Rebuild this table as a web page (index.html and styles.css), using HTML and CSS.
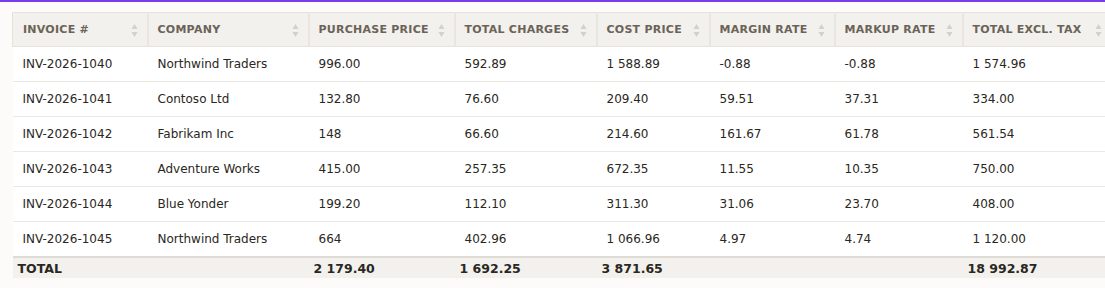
FILE: index.html
```html
<!DOCTYPE html>
<html>
<head>
<meta charset="utf-8">
<link rel="stylesheet" href="styles.css">
</head>
<body>
<div class="topbar"></div>
<div class="wrap">
<table class="grid">
<colgroup>
<col class="c1"><col class="c2"><col class="c3"><col class="c4"><col class="c5"><col class="c6"><col class="c7"><col class="c8">
</colgroup>
<thead>
<tr>
<th><span class="th">INVOICE #</span><span class="sort"><svg width="7" height="16" viewBox="0 0 7 16"><path d="M3.5 2 L6.5 7 L0.5 7 Z" fill="#d4d0c9"/><path d="M3.5 15 L6.5 10 L0.5 10 Z" fill="#d4d0c9"/></svg></span></th>
<th><span class="th">COMPANY</span><span class="sort"><svg width="7" height="16" viewBox="0 0 7 16"><path d="M3.5 2 L6.5 7 L0.5 7 Z" fill="#d4d0c9"/><path d="M3.5 15 L6.5 10 L0.5 10 Z" fill="#d4d0c9"/></svg></span></th>
<th><span class="th">PURCHASE PRICE</span><span class="sort"><svg width="7" height="16" viewBox="0 0 7 16"><path d="M3.5 2 L6.5 7 L0.5 7 Z" fill="#d4d0c9"/><path d="M3.5 15 L6.5 10 L0.5 10 Z" fill="#d4d0c9"/></svg></span></th>
<th><span class="th">TOTAL CHARGES</span><span class="sort"><svg width="7" height="16" viewBox="0 0 7 16"><path d="M3.5 2 L6.5 7 L0.5 7 Z" fill="#d4d0c9"/><path d="M3.5 15 L6.5 10 L0.5 10 Z" fill="#d4d0c9"/></svg></span></th>
<th><span class="th">COST PRICE</span><span class="sort"><svg width="7" height="16" viewBox="0 0 7 16"><path d="M3.5 2 L6.5 7 L0.5 7 Z" fill="#d4d0c9"/><path d="M3.5 15 L6.5 10 L0.5 10 Z" fill="#d4d0c9"/></svg></span></th>
<th><span class="th">MARGIN RATE</span><span class="sort"><svg width="7" height="16" viewBox="0 0 7 16"><path d="M3.5 2 L6.5 7 L0.5 7 Z" fill="#d4d0c9"/><path d="M3.5 15 L6.5 10 L0.5 10 Z" fill="#d4d0c9"/></svg></span></th>
<th><span class="th">MARKUP RATE</span><span class="sort"><svg width="7" height="16" viewBox="0 0 7 16"><path d="M3.5 2 L6.5 7 L0.5 7 Z" fill="#d4d0c9"/><path d="M3.5 15 L6.5 10 L0.5 10 Z" fill="#d4d0c9"/></svg></span></th>
<th><span class="th">TOTAL EXCL. TAX</span><span class="sort"><svg width="7" height="16" viewBox="0 0 7 16"><path d="M3.5 2 L6.5 7 L0.5 7 Z" fill="#d4d0c9"/><path d="M3.5 15 L6.5 10 L0.5 10 Z" fill="#d4d0c9"/></svg></span></th>
</tr>
</thead>
<tbody>
<tr><td>INV-2026-1040</td><td>Northwind Traders</td><td>996.00</td><td>592.89</td><td>1 588.89</td><td>-0.88</td><td>-0.88</td><td>1 574.96</td></tr>
<tr><td>INV-2026-1041</td><td>Contoso Ltd</td><td>132.80</td><td>76.60</td><td>209.40</td><td>59.51</td><td>37.31</td><td>334.00</td></tr>
<tr><td>INV-2026-1042</td><td>Fabrikam Inc</td><td>148</td><td>66.60</td><td>214.60</td><td>161.67</td><td>61.78</td><td>561.54</td></tr>
<tr><td>INV-2026-1043</td><td>Adventure Works</td><td>415.00</td><td>257.35</td><td>672.35</td><td>11.55</td><td>10.35</td><td>750.00</td></tr>
<tr><td>INV-2026-1044</td><td>Blue Yonder</td><td>199.20</td><td>112.10</td><td>311.30</td><td>31.06</td><td>23.70</td><td>408.00</td></tr>
<tr><td>INV-2026-1045</td><td>Northwind Traders</td><td>664</td><td>402.96</td><td>1 066.96</td><td>4.97</td><td>4.74</td><td>1 120.00</td></tr>
</tbody>
<tfoot>
<tr><td>TOTAL</td><td></td><td>2 179.40</td><td>1 692.25</td><td>3 871.65</td><td></td><td></td><td>18 992.87</td></tr>
</tfoot>
</table>
</div>
</body>
</html>
```

FILE: styles.css
```css
html, body {
  margin: 0;
  padding: 0;
  background: #fcfbf9;
  overflow: hidden;
}
body {
  font-family: "DejaVu Sans", sans-serif;
  font-size: 12px;
  color: #2a2722;
}
.topbar {
  height: 2px;
  background: #7c3aed;
}
.wrap {
  padding: 10px 0 0 12px;
  overflow: hidden;
}
.grid {
  border-collapse: collapse;
  table-layout: fixed;
  width: 1098px;
}
.c1 { width: 135px; }
.c2 { width: 161px; }
.c3 { width: 146px; }
.c4 { width: 142px; }
.c5 { width: 113px; }
.c6 { width: 125px; }
.c7 { width: 128px; }
.c8 { width: 148px; }
.grid thead th {
  background: #f2f1ed;
  border-top: 1px solid #e6e2dc;
  border-bottom: 1px solid #e6e2dc;
  border-left: 2px solid #e9e5df;
  height: 32px;
  padding: 1px 9px 0 9px;
  text-align: left;
  vertical-align: middle;
  white-space: nowrap;
}
.grid thead th:first-child {
  border-left: 1px solid #e6e2dc;
  padding-left: 10px;
}
.th {
  font-size: 11px;
  font-weight: bold;
  letter-spacing: 0.25px;
  color: #6b6357;
}
.sort {
  float: right;
  height: 16px;
}
.sort svg { display: block; }
.grid tbody td {
  background: #ffffff;
  height: 34px;
  padding: 0 10px;
  border-bottom: 1px solid #ebe8e3;
  vertical-align: middle;
  white-space: nowrap;
}
.grid tbody tr:last-child td {
  border-bottom: 2px solid #e0dcd5;
}
.grid tfoot td {
  background: #f2f1ed;
  font-weight: bold;
  font-size: 12.5px;
  height: 20px;
  padding: 0 5px;
  vertical-align: middle;
  white-space: nowrap;
  color: #2a2722;
}
```
